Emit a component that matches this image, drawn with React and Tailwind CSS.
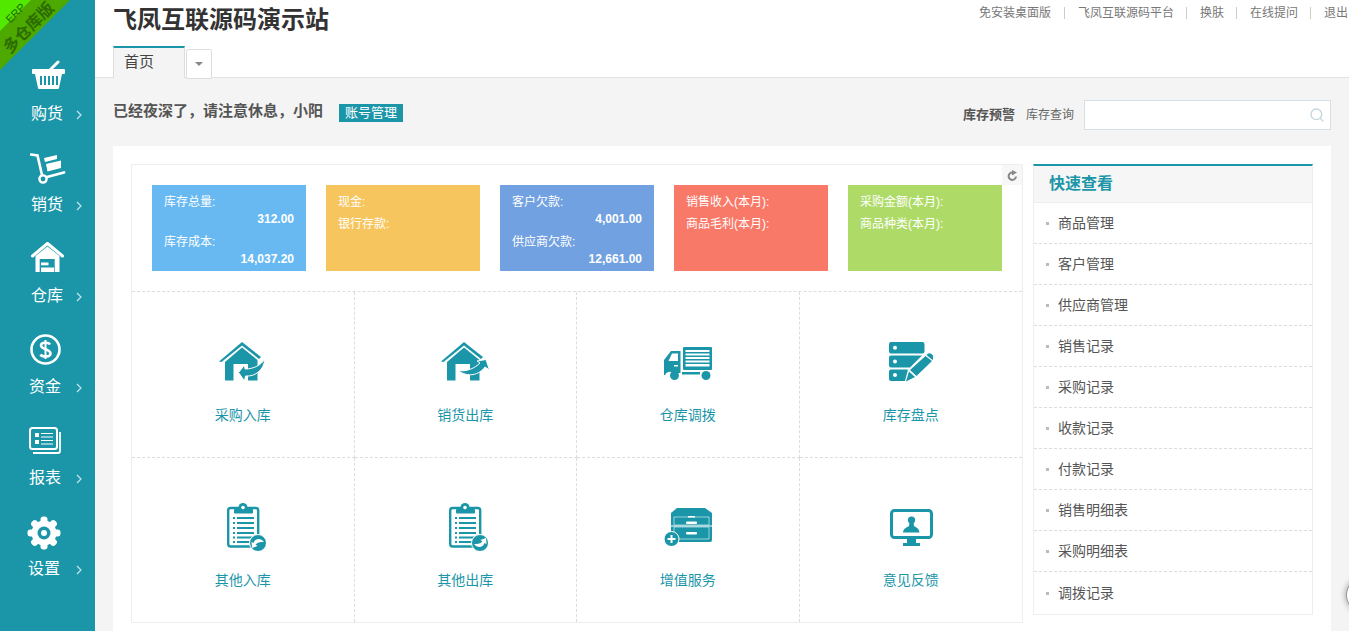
import { Search } from "lucide-react";

const teal = "#1b96a9";

function Basket() {
  return (
    <svg width="34" height="29" viewBox="0 0 34 29" fill="#fff">
      <path d="M14 14 L26 2" stroke="#fff" strokeWidth="3" strokeLinecap="round" />
      <rect x="0" y="9" width="33" height="5" rx="1" />
      <path d="M3 14h27l-3 14a1 1 0 0 1-1 1H7a1 1 0 0 1-1-1z" />
      <g fill={teal}>
        <rect x="8" y="16" width="2" height="9" />
        <rect x="12" y="16" width="2" height="9" />
        <rect x="16" y="16" width="2" height="9" />
        <rect x="20" y="16" width="2" height="9" />
        <rect x="24" y="16" width="2" height="9" />
      </g>
    </svg>
  );
}

function Cart() {
  return (
    <svg width="36" height="31" viewBox="0 0 36 31" fill="#fff">
      <path d="M1 1.5 L7.5 2.5 L12 22" stroke="#fff" strokeWidth="2.6" fill="none" strokeLinecap="round" />
      <circle cx="13" cy="26" r="3.6" fill="none" stroke="#fff" strokeWidth="2.4" />
      <path d="M17 24 L34 19.5" stroke="#fff" strokeWidth="2.8" strokeLinecap="round" />
      <path d="M14 5 L27 2 V6 L15 9z" />
      <path d="M16 11 L31 7.5 V15 L17.5 18.5z" />
    </svg>
  );
}

function Warehouse() {
  return (
    <svg width="33" height="30" viewBox="0 0 33 30" fill="#fff">
      <path d="M1.5 14 L16.5 1.5 L31.5 14" stroke="#fff" strokeWidth="3" fill="none" strokeLinecap="round" strokeLinejoin="round" />
      <path d="M4.5 14 L16.5 4.5 L28.5 14 V30 H4.5z" />
      <rect x="8.7" y="17" width="15" height="13" fill={teal} />
      <rect x="10" y="20.5" width="7.5" height="2.8" fill="#fff" />
      <rect x="10" y="25.5" width="13" height="4.5" fill="#fff" />
    </svg>
  );
}

function Dollar() {
  return (
    <svg width="31" height="31" viewBox="0 0 31 31" fill="none" stroke="#fff">
      <circle cx="15.5" cy="15.5" r="14" strokeWidth="2.6" />
      <path d="M20 10.5 C19 8.5 11 7.5 11 11.5 C11 15.5 20.5 15 20.5 19.5 C20.5 23.5 12 23 10.5 20.5" strokeWidth="2.6" />
      <path d="M15.5 6 V25" strokeWidth="2" />
    </svg>
  );
}

function News() {
  return (
    <svg width="32" height="27" viewBox="0 0 32 27" fill="none" stroke="#fff">
      <rect x="1" y="1" width="27" height="21" rx="2.5" strokeWidth="2" />
      <path d="M31 5 V24 a2 2 0 0 1-2 2 H4" strokeWidth="1.8" />
      <rect x="6" y="6" width="4" height="4" fill="#fff" stroke="none" />
      <rect x="6" y="13" width="4" height="4" fill="#fff" stroke="none" />
      <path d="M12 6.5 H24 M12 10 H24 M12 13.5 H24 M12 17 H24" strokeWidth="1" />
    </svg>
  );
}

function Gear() {
  return (
    <svg width="34" height="34" viewBox="0 0 34 34" fill="#fff">
      <circle cx="17" cy="17" r="12.5" />
      {[0, 45, 90, 135, 180, 225, 270, 315].map((a) => (
        <rect key={a} x="13.5" y="0.5" width="7" height="8" rx="3" transform={`rotate(${a} 17 17)`} />
      ))}
      <circle cx="17" cy="17" r="6.5" fill={teal} />
      <circle cx="17" cy="17" r="3" />
    </svg>
  );
}

function HouseBase() {
  return (
    <>
      <path d="M0 19.5 L23 0 L42 15 L40 17 L23 3.5 L2.5 20z" />
      <path d="M6 20 L23 5.5 L38.5 18 V38.5 H29 V33 H29 V22 H14.5 V38.5 H6z" />
    </>
  );
}

function HouseIn() {
  return (
    <svg width="47" height="39" viewBox="0 0 47 39" fill={teal}>
      <HouseBase />
      <path d="M19.5 30.5 L25.5 23 L26 27 C35 27 42 23 46 17 C45 27 37 35 26.5 34 L25.5 39z" stroke="#fff" strokeWidth="1" />
    </svg>
  );
}

function HouseOut() {
  return (
    <svg width="49" height="39" viewBox="0 0 49 39" fill={teal}>
      <HouseBase />
      <path d="M17 28.5 C26 30 34 26 39 21 L36 19 L45 17.5 L48.5 28 L44 25 C38 33 27 36 17 28.5z" stroke="#fff" strokeWidth="1" />
    </svg>
  );
}

function Truck() {
  return (
    <svg width="48" height="33" viewBox="0 0 48 33" fill={teal}>
      <rect x="19" y="0" width="29" height="23" rx="1" />
      <g fill="#fff">
        <rect x="21.5" y="3" width="24" height="2" />
        <rect x="21.5" y="6.5" width="24" height="2" />
        <rect x="21.5" y="10" width="24" height="2" />
        <rect x="21.5" y="13.5" width="24" height="2" />
        <rect x="21.5" y="17" width="24" height="2.5" />
      </g>
      <path d="M7 4 H16.5 V26 H9 A5 5 0 0 0 1 28 H0 V13z" />
      <path d="M8 6.5 H14 V14 H4.5z" fill="#fff" />
      <rect x="10" y="18" width="4" height="1.5" fill="#fff" />
      <rect x="18" y="25" width="18" height="2.5" />
      <circle cx="10.5" cy="28.5" r="4.5" />
      <circle cx="42" cy="28.5" r="4.5" />
    </svg>
  );
}

function Storage() {
  return (
    <svg width="44" height="40" viewBox="0 0 44 40" fill={teal}>
      <rect x="0" y="0" width="35.5" height="11.5" rx="2" />
      <path d="M2 13.5 H33 L21 25.5 H2 a2 2 0 0 1-2-2 V15.5 a2 2 0 0 1 2-2z" />
      <path d="M2 27.5 H19 L16 39 H2 a2 2 0 0 1-2-2 V29.5 a2 2 0 0 1 2-2z" />
      <circle cx="6" cy="5.7" r="2" fill="#fff" />
      <circle cx="6" cy="19.5" r="2" fill="#fff" />
      <circle cx="6" cy="33" r="2" fill="#fff" />
      <path d="M21 28 L36.5 14 L43 19 L27.5 34z" />
      <path d="M37.5 13 a3 3 0 0 1 6 5z" />
      <path d="M20 29.5 L26 35 L17 39.5z" />
    </svg>
  );
}

function Clipboard({ flip }) {
  return (
    <svg width="39" height="48" viewBox="0 0 39 48" fill={teal}>
      <rect x="1.2" y="5" width="30" height="38.5" rx="2.5" fill="none" stroke={teal} strokeWidth="2.4" />
      <rect x="7" y="6" width="19" height="4.5" rx="1" />
      <circle cx="16" cy="4.5" r="4.5" />
      <circle cx="16" cy="4.5" r="1.8" fill="#fff" />
      {[14, 19, 24, 29, 33.5, 38].map((y) => (
        <g key={y}>
          <rect x="6" y={y} width="2" height="2" />
          <rect x="10" y={y} width="17" height="2" />
        </g>
      ))}
      <circle cx="31" cy="40" r="8.5" stroke="#fff" strokeWidth="1" />
      {flip ? (
        <path d="M25 41 C28 45 34 45 35.5 40 L37.5 41 L37 35 L31.5 37 L33.5 38.5 C31 41 28 41 25 41z" fill="#fff" />
      ) : (
        <path d="M37 39 C34 35 28 35 26.5 40 L24.5 39 L25 45 L30.5 43 L28.5 41.5 C31 39 34 39 37 39z" fill="#fff" />
      )}
    </svg>
  );
}

function Drawer() {
  return (
    <svg width="48" height="38" viewBox="0 0 48 38" fill={teal}>
      <path d="M13 0 H41 L48 5 V32 a2 2 0 0 1-2 2 H9 a2 2 0 0 1-2-2 V5z" />
      <path d="M10 9 H45 V17 H10z M10 19 H45 V31 H10z" fill="none" stroke="#fff" strokeWidth="0.8" opacity="0.7" />
      <path d="M7 18 H48" stroke="#fff" strokeWidth="1" />
      <rect x="22" y="13.5" width="11" height="2.5" rx="1" fill="#fff" />
      <rect x="22" y="24" width="11" height="2.5" rx="1" fill="#fff" />
      <rect x="24" y="8" width="7" height="1.5" fill="#fff" />
      <circle cx="7.5" cy="31" r="7.5" stroke="#fff" strokeWidth="1" />
      <path d="M3.5 31 H11.5 M7.5 27 V35" stroke="#fff" strokeWidth="2" />
    </svg>
  );
}

function Monitor() {
  return (
    <svg width="43" height="37" viewBox="0 0 43 37" fill={teal}>
      <rect x="1.5" y="1.5" width="40" height="27" rx="3" fill="none" stroke={teal} strokeWidth="3" />
      <circle cx="21.5" cy="11" r="3.6" />
      <path d="M19.5 13 H23.5 L24 17 C26 18.5 29 19 29.5 23.5 H13 C13.5 19 17 18.5 19 17z" />
      <rect x="17" y="29" width="9" height="5" />
      <rect x="13" y="34" width="17" height="3" />
    </svg>
  );
}

const navItems = [
  { label: "购货", icon: <Basket />, iconClass: "pl-[32px]", rowClass: "pl-[31px]" },
  { label: "销货", icon: <Cart />, iconClass: "pt-[2px] pl-[30px]", rowClass: "pl-[31px]" },
  { label: "仓库", icon: <Warehouse />, iconClass: "pl-[31px]", rowClass: "pl-[31px]" },
  { label: "资金", icon: <Dollar />, iconClass: "pt-[1px] pl-[30px]", rowClass: "pl-[29px]" },
  { label: "报表", icon: <News />, iconClass: "pt-[3px] pl-[29px]", rowClass: "pl-[29px]" },
  { label: "设置", icon: <Gear />, iconClass: "pt-[1px] pl-[27px]", rowClass: "pl-[28px]" },
];

const topLinks = ["飞凤互联源码平台", "换肤", "在线提问", "退出"];

const cards = [
  {
    color: "bg-[#68b9f2]",
    rows: [
      ["库存总量:", "312.00"],
      ["库存成本:", "14,037.20"],
    ],
  },
  { color: "bg-[#f7c55d]", rows: [["现金:"], ["银行存款:"]] },
  {
    color: "bg-[#71a1e0]",
    rows: [
      ["客户欠款:", "4,001.00"],
      ["供应商欠款:", "12,661.00"],
    ],
  },
  { color: "bg-[#f97968]", rows: [["销售收入(本月):"], ["商品毛利(本月):"]] },
  { color: "bg-[#aedb67]", rows: [["采购金额(本月):"], ["商品种类(本月):"]] },
];

const shortcuts = [
  { label: "采购入库", icon: <HouseIn />, iconClass: "" },
  { label: "销货出库", icon: <HouseOut />, iconClass: "" },
  { label: "仓库调拨", icon: <Truck />, iconClass: "mt-[5px]" },
  { label: "库存盘点", icon: <Storage />, iconClass: "mt-[2px]" },
  { label: "其他入库", icon: <Clipboard />, iconClass: "ml-[7px]" },
  { label: "其他出库", icon: <Clipboard flip />, iconClass: "ml-[7px]" },
  { label: "增值服务", icon: <Drawer />, iconClass: "" },
  { label: "意见反馈", icon: <Monitor />, iconClass: "ml-[1px]" },
];

const quickLinks = ["商品管理", "客户管理", "供应商管理", "销售记录", "采购记录", "收款记录", "付款记录", "销售明细表", "采购明细表", "调拨记录"];

function App() {
  return (
    <div className="relative flex h-screen w-full overflow-hidden bg-[#f4f4f4] font-['Liberation_Sans','Noto_Sans_CJK_SC',sans-serif]">
      <aside className="relative w-[95px] shrink-0 bg-[#1b96a9] pt-[60px] text-white">
        <div className="absolute left-0 top-0 h-[70px] w-[70px]">
          <svg width="70" height="70" viewBox="0 0 70 70" className="absolute left-0 top-0">
            <polygon points="0,0 70,0 0,70" fill="#4da800" />
            <polygon points="0,0 31,0 0,31" fill="#52e800" />
          </svg>
          <span className="absolute left-[4px] top-[6px] -rotate-45 text-[11px] leading-[14px] text-[#1f6b00]">ERP</span>
          <span className="absolute left-[-3px] top-[20px] w-[64px] -rotate-45 whitespace-nowrap text-center text-[16px] font-bold leading-[16px] text-[#2b6b00]">多仓库版</span>
        </div>
        {navItems.map((item) => (
          <div key={item.label} className="h-[91px]">
            <div className={`h-[44px] ${item.iconClass}`}>{item.icon}</div>
            <div className={`flex h-[20px] items-center justify-between pr-[13px] text-[16px] leading-[20px] ${item.rowClass}`}>
              <span>{item.label}</span>
              <svg width="6" height="10" viewBox="0 0 6 10" fill="none" stroke="#c6e4e9" strokeWidth="1.2" className="mt-[1px]">
                <path d="M1 1 L5 5 L1 9" />
              </svg>
            </div>
          </div>
        ))}
      </aside>

      <main className="flex min-w-0 flex-1 flex-col">
        <header className="h-[78px] shrink-0 border-b border-[#e1e1e1] bg-white pl-[18px]">
          <div className="flex h-[46px] items-start justify-between">
            <h1 className="text-[24px] font-bold leading-[40px] text-[#333]">飞凤互联源码演示站</h1>
            <div className="flex pr-px pt-[7px] text-[12px] leading-[12px] text-[#777]">
              <span className="pr-[13px]">免安装桌面版</span>
              {topLinks.map((link, i) => (
                <span key={link} className={`border-l border-[#ccc] pl-[13px] ${i < 3 ? "pr-[12px]" : ""}`}>
                  {link}
                </span>
              ))}
            </div>
          </div>
          <div className="flex h-[32px] items-end">
            <div className="flex h-[32px] w-[72px] items-center border-x border-t-2 border-x-[#ddd] border-t-[#1b96a9] bg-[#f4f4f4] pb-[2px] pl-[10px] text-[15px] text-[#444]">首页</div>
            <div className="-mb-px ml-px flex h-[30px] w-[26px] items-center justify-center rounded-t-[2px] border border-[#ddd] bg-white">
              <span className="h-0 w-0 border-x-[4px] border-t-[4px] border-x-transparent border-t-[#888]"></span>
            </div>
          </div>
        </header>

        <div className="flex h-[68px] shrink-0 items-start pl-[18px] pr-[18px] pt-[22px]">
          <div className="flex h-[24px] items-center">
            <span className="mb-[2px] text-[15px] font-bold leading-[22px] text-[#555]">已经夜深了，请注意休息，小阳</span>
            <span className="ml-[16px] mt-[2px] flex h-[18px] w-[64px] items-center justify-center bg-[#1b96a9] text-[13px] text-white">账号管理</span>
          </div>
          <div className="ml-auto flex items-center">
            <span className="text-[13px] font-bold text-[#555]">库存预警</span>
            <span className="ml-[11px] text-[12px] text-[#666]">库存查询</span>
            <div className="ml-[10px] flex h-[30px] w-[247px] items-center justify-end border border-[#d6dfe6] bg-white pr-[5px]">
              <Search size={16} color="#c5d5dc" strokeWidth={2} />
            </div>
          </div>
        </div>

        <div className="mx-[18px] flex min-h-0 flex-1 items-start gap-[10px] bg-white pl-[18px] pt-[18px]">
          <section className="relative h-[459px] w-[892px] shrink-0 border border-[#eee]">
            <div className="absolute right-0 top-0 flex h-[20px] w-[20px] items-center justify-center bg-[#f7f7f7]">
              <svg width="11" height="11" viewBox="0 0 11 11" fill="none" stroke="#888" strokeWidth="2">
                <path d="M9 6.5 A3.7 3.7 0 1 1 5.5 2.5" />
                <path d="M5 0 L10 2.5 L5 5.5z" fill="#888" stroke="none" />
              </svg>
            </div>
            <div className="flex h-[127px] gap-[20px] border-b border-dashed border-[#ddd] pl-[20px] pt-[20px]">
              {cards.map((card, i) => (
                <div key={i} className={`h-[86px] w-[154px] px-[12px] pt-[6px] text-[12px] text-white ${card.color}`}>
                  {card.rows.map((row) => (
                    <div key={row[0]}>
                      <div className="leading-[22px]">{row[0]}</div>
                      {row[1] && <div className="mb-[5px] text-right font-bold leading-[13px]">{row[1]}</div>}
                    </div>
                  ))}
                </div>
              ))}
            </div>
            <div className="grid grid-cols-4">
              {shortcuts.map((item, i) => (
                <div
                  key={item.label}
                  className={`flex flex-col items-center ${i < 4 ? "h-[166px] border-b border-dashed border-[#ddd]" : "h-[164px]"} ${i % 4 < 3 ? "border-r border-dashed border-[#ddd]" : ""}`}
                >
                  <div className="mt-[44px] flex h-[50px] items-center justify-center">
                    <div className={`flex ${item.iconClass}`}>{item.icon}</div>
                  </div>
                  <div className={`text-[14px] leading-[20px] text-[#1b96a9] ${i < 4 ? "mt-[19px]" : "mt-[18px]"}`}>{item.label}</div>
                </div>
              ))}
            </div>
          </section>

          <section className="w-[280px] shrink-0 border-x border-b border-t-2 border-x-[#eee] border-b-[#eee] border-t-[#1b96a9]">
            <div className="flex h-[37px] items-center border-b border-[#eee] bg-[#f6f6f6] pl-[15px] text-[16px] font-bold text-[#1b96a9]">快速查看</div>
            {quickLinks.map((link, i) => (
              <div key={link} className={`flex items-center pl-[12px] text-[14px] text-[#555] ${i < 9 ? "h-[41px] border-b border-dashed border-[#ddd]" : "h-[42px]"}`}>
                <span className="h-[3px] w-[3px] bg-[#bbb]"></span>
                <span className="ml-[9px]">{link}</span>
              </div>
            ))}
          </section>
        </div>
      </main>

      <div className="absolute left-[1346px] top-[578px] h-[34px] w-[34px] rounded-full border border-[#999] bg-white shadow-[0_0_6px_rgba(0,0,0,0.4)]"></div>
    </div>
  );
}

export default App;
